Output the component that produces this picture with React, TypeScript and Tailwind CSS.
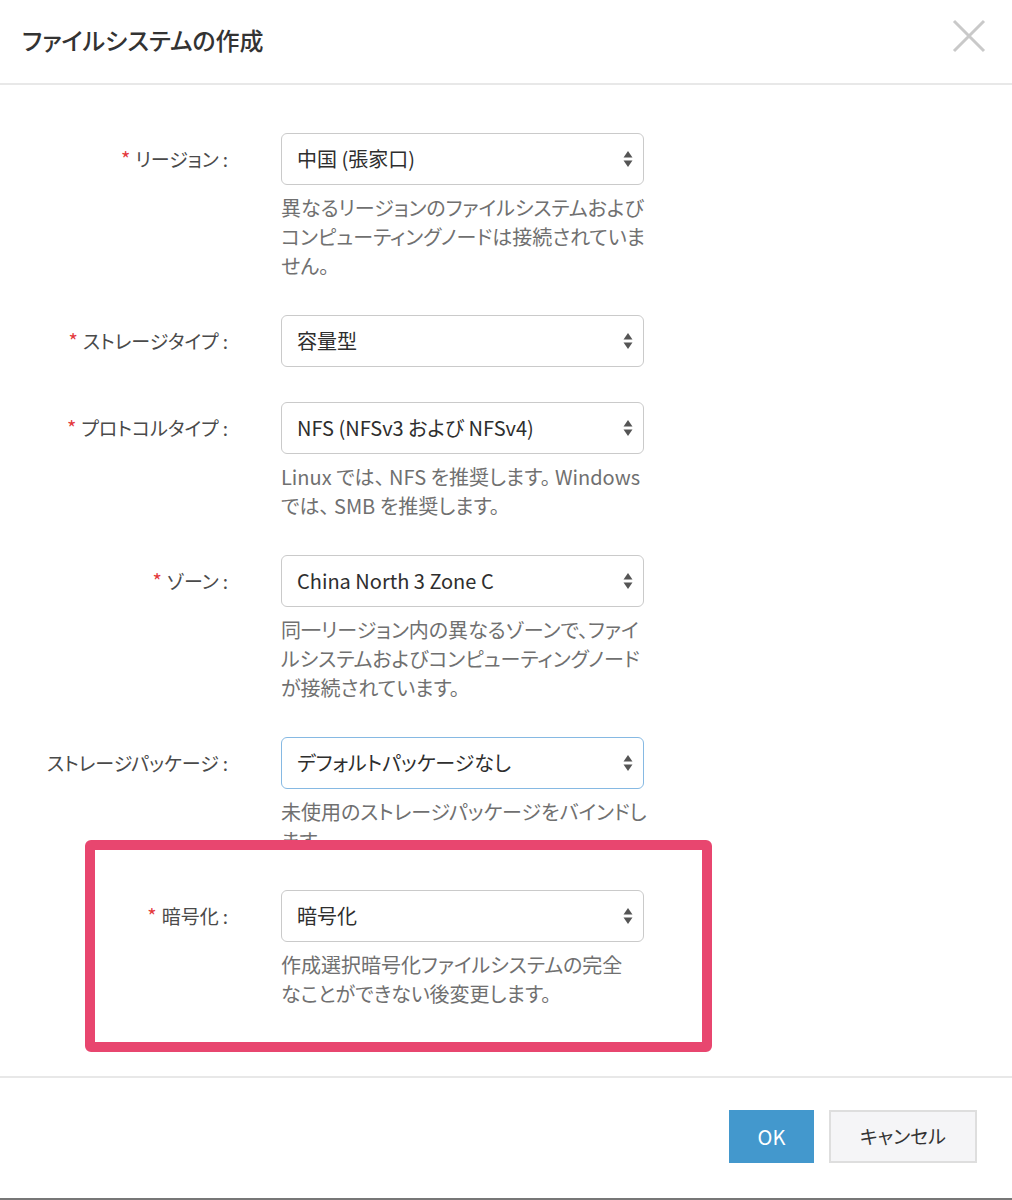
import type { ReactNode } from "react";

const FONT = "[font-family:'Noto_Sans_CJK_JP','Noto_Sans',sans-serif] [font-feature-settings:'palt']";

function Arrows() {
  return (
    <svg width="10" height="18" viewBox="0 0 10 18" className="shrink-0">
      <path d="M5 1 L9.5 7.5 H0.5 Z" fill="#555" />
      <path d="M5 17 L9.5 10.5 H0.5 Z" fill="#555" />
    </svg>
  );
}

function Field({
  label,
  required = true,
  value,
  help,
  focused = false,
  className = "",
}: {
  label: string;
  required?: boolean;
  value: string;
  help?: ReactNode;
  focused?: boolean;
  className?: string;
}) {
  return (
    <div className={`mb-[35px] flex ${className}`}>
      <div className="flex h-[52px] w-[228px] shrink-0 items-center justify-end text-[19px] text-[#4a4a4a]">
        {required ? <span className="mr-[5px] text-[20px] text-[#e4393c]">*</span> : null}
        <span>{label}</span>
        <span className="ml-[4px]">:</span>
      </div>
      <div className="ml-[53px] w-[363px]">
        <div
          className={`flex h-[52px] items-center justify-between rounded-[6px] border bg-white pl-[15px] pr-[10px] text-[20px] text-[#2e2e2e] ${
            focused ? "border-[#86b9e3]" : "border-[#cacaca]"
          }`}
        >
          <span className="whitespace-nowrap">{value}</span>
          <Arrows />
        </div>
        {help ? (
          <div className="mt-[8px] whitespace-nowrap text-[20px] leading-[29px] text-[#707070]">{help}</div>
        ) : null}
      </div>
    </div>
  );
}

export default function App() {
  return (
    <div className={`relative h-[1200px] w-[1012px] overflow-hidden bg-white ${FONT}`}>
      <div className="flex h-[85px] items-center justify-between border-b-2 border-[#e8e8e8] pl-[22px] pr-[26px]">
        <h1 className="-mt-[4px] text-[24px] font-medium text-[#333]">ファイルシステムの作成</h1>
        <svg width="34" height="34" viewBox="0 0 34 34" className="-mt-[12px]">
          <path d="M2 2 L32 32 M32 2 L2 32" stroke="#c9c9c9" strokeWidth="3" />
        </svg>
      </div>

      <div className="relative pb-[33px] pt-[48px]">
        <Field
          label="リージョン"
          value="中国 (張家口)"
          help={
            <>
              異なるリージョンのファイルシステムおよび
              <br />
              コンピューティングノードは接続されていま
              <br />
              せん。
            </>
          }
        />
        <Field label="ストレージタイプ" value="容量型" />
        <Field
          label="プロトコルタイプ"
          value="NFS (NFSv3 および NFSv4)"
          help={
            <>
              Linux では、 NFS を推奨します。 Windows
              <br />
              では、 SMB を推奨します。
            </>
          }
        />
        <Field
          label="ゾーン"
          value="China North 3 Zone C"
          help={
            <>
              同一リージョン内の異なるゾーンで、ファイ
              <br />
              ルシステムおよびコンピューティングノード
              <br />
              が接続されています。
            </>
          }
        />
        <Field
          label="ストレージパッケージ"
          required={false}
          focused
          value="デフォルトパッケージなし"
          help={
            <>
              未使用のストレージパッケージをバインドし
              <br />
              ます。
            </>
          }
        />

        {/* annotation box */}
        <div className="absolute left-[85px] top-[755px] z-[1] h-[212px] w-[627px] rounded-[6px] border-[10px] border-[#e8466f] bg-white" />

        <Field
          className="relative z-[2]"
          label="暗号化"
          value="暗号化"
          help={
            <>
              作成選択暗号化ファイルシステムの完全
              <br />
              なことができない後変更します。
            </>
          }
        />
      </div>

      <div className="flex justify-end gap-[15px] border-b-2 border-t-2 border-b-[#777] border-t-[#e8e8e8] pb-[35px] pl-[22px] pr-[35px] pt-[32px]">
        <button type="button" className="h-[53px] w-[85px] bg-[#4398cd] text-[20px] text-white">
          OK
        </button>
        <button
          type="button"
          className="h-[53px] w-[148px] border-2 border-[#dedede] bg-[#f5f5f7] text-[19px] text-[#333]"
        >
          キャンセル
        </button>
      </div>
    </div>
  );
}
